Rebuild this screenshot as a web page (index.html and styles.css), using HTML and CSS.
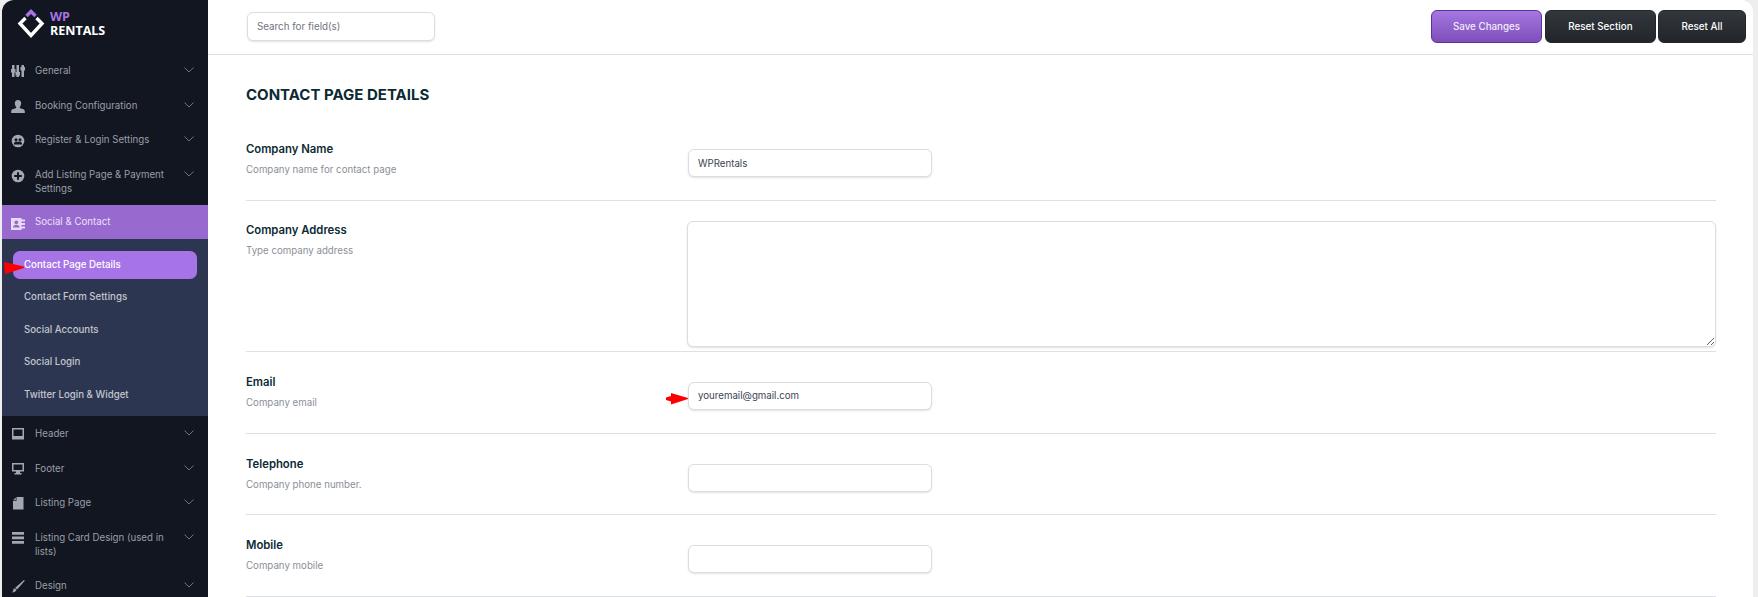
FILE: index.html
```html
<!DOCTYPE html>
<html lang="en">
<head>
    <meta charset="UTF-8">
    <meta name="viewport" content="width=device-width, initial-scale=1.0">
    <title>WpRentals Options</title>
    <link rel="stylesheet" href="styles.css">
</head>
<body>

<div class="app">
    <aside class="sidebar">
        <div class="logo">
            <svg class="logo-mark" width="28" height="30" viewBox="0 0 28 30">
                <path d="M9.500 7 14 2.500 18.500 7" fill="none" stroke="#a674e6" stroke-width="3.400"/>
                <path d="M8.500 9 3 14.500 14 26.500 25 14.500 19.500 9" fill="none" stroke="#fff" stroke-width="3.400"/>
            </svg>
            <div class="logo-text"><span class="logo-wp">WP</span><span class="logo-name">RENTALS</span></div>
        </div>

        <nav>
            <a class="nav-item">
                <svg class="nav-icon" viewBox="0 0 14 14" fill="#a3a7b0"><path d="M1 0h2.500v4H4.500v3.500H3.500V12H1V7.500H0V4h1zM5.500 0H8v7h1v3.500H8V12H5.500v-1.500h-1V7h1zM10.500 0H13v2h1v3.500h-1V12h-2.500V5.500h-1V2h1z"/></svg>
                <span class="nav-label">General</span>
                <svg class="chevron" viewBox="0 0 10 6"><path d="M.5.500 5 5 9.500.500"/></svg>
            </a>
            <a class="nav-item">
                <svg class="nav-icon" viewBox="0 0 14 14" fill="#a3a7b0"><path d="M7 0c2 0 3.200 1.300 3.200 3.200S9 6.500 8.600 8c1.500.6 5.200.8 5.200 3.200V13H.2v-1.800C.2 8.800 3.900 8.600 5.400 8 5 6.500 3.800 5.100 3.800 3.200S5 0 7 0z"/></svg>
                <span class="nav-label">Booking Configuration</span>
                <svg class="chevron" viewBox="0 0 10 6"><path d="M.5.500 5 5 9.500.500"/></svg>
            </a>
            <a class="nav-item">
                <svg class="nav-icon" viewBox="0 0 14 14"><circle cx="7" cy="7" r="6.300" fill="#a3a7b0"/><circle cx="5" cy="5.800" r="1.500" fill="#111620"/><circle cx="9" cy="5.800" r="1.500" fill="#111620"/><path d="M2.800 10.500c0-2 1.500-3 2.200-3s1.200.3 2 .3 1.300-.3 2-.3 2.200 1 2.200 3z" fill="#111620"/></svg>
                <span class="nav-label">Register &amp; Login Settings</span>
                <svg class="chevron" viewBox="0 0 10 6"><path d="M.5.500 5 5 9.500.500"/></svg>
            </a>
            <a class="nav-item">
                <svg class="nav-icon" viewBox="0 0 14 14"><circle cx="7" cy="7" r="6.300" fill="#a3a7b0"/><path d="M6 3.200h2V6h2.800v2H8v2.800H6V8H3.200V6H6z" fill="#111620"/></svg>
                <span class="nav-label">Add Listing Page &amp; Payment Settings</span>
                <svg class="chevron" viewBox="0 0 10 6"><path d="M.5.500 5 5 9.500.500"/></svg>
            </a>
            <a class="nav-item nav-item-open">
                <svg class="nav-icon" viewBox="0 0 14 14"><path d="M0 1h10.500v1.500H14v2h-3.500v1.500H14v2h-3.500v1.500H14v2h-3.500V13H0z" fill="#e6dcf5"/><circle cx="5.300" cy="5.300" r="1.900" fill="#9869cf"/><path d="M2 10.500c0-2 1.400-2.800 3.300-2.800s3.300.8 3.300 2.800z" fill="#9869cf"/></svg>
                <span class="nav-label nav-label-open">Social &amp; Contact</span>
            </a>
            <div class="subnav">
                <a class="subnav-item subnav-active">Contact Page Details
                    <svg class="red-arrow arrow-pill" width="21" height="12" viewBox="0 0 21 12"><path d="M0 0 20 4.500v1.500L1 12z" fill="#f00"/></svg>
                </a>
                <a class="subnav-item">Contact Form Settings</a>
                <a class="subnav-item">Social Accounts</a>
                <a class="subnav-item">Social Login</a>
                <a class="subnav-item">Twitter Login &amp; Widget</a>
            </div>
            <a class="nav-item">
                <svg class="nav-icon" viewBox="0 0 14 14"><path d="M1 0h12v11.500H1z" fill="#a3a7b0"/><path d="M2.500 1.500h9V8h-9z" fill="#111620"/></svg>
                <span class="nav-label">Header</span>
                <svg class="chevron" viewBox="0 0 10 6"><path d="M.5.500 5 5 9.500.500"/></svg>
            </a>
            <a class="nav-item">
                <svg class="nav-icon" viewBox="0 0 14 14"><path d="M1 0h12v8.500H9V10h1.500v1.500h-7V10H5V8.500H1z" fill="#a3a7b0"/><path d="M2.500 1.500h9v5.500h-9z" fill="#111620"/></svg>
                <span class="nav-label">Footer</span>
                <svg class="chevron" viewBox="0 0 10 6"><path d="M.5.500 5 5 9.500.500"/></svg>
            </a>
            <a class="nav-item">
                <svg class="nav-icon" viewBox="0 0 14 14" fill="#a3a7b0"><path d="M5.500 0H12.500v12.500H2V3.800H5.500zM2.300 3 4.800.400V3z"/></svg>
                <span class="nav-label">Listing Page</span>
                <svg class="chevron" viewBox="0 0 10 6"><path d="M.5.500 5 5 9.500.500"/></svg>
            </a>
            <a class="nav-item">
                <svg class="nav-icon" viewBox="0 0 14 14" fill="#a3a7b0"><path d="M1 0h12v2.800H1zM1 4.500h12v2.800H1zM1 9h12v2.800H1z"/></svg>
                <span class="nav-label">Listing Card Design (used in lists)</span>
                <svg class="chevron" viewBox="0 0 10 6"><path d="M.5.500 5 5 9.500.500"/></svg>
            </a>
            <a class="nav-item">
                <svg class="nav-icon" viewBox="0 0 14 14" fill="#a3a7b0"><path d="M13 0 13.800.800 6 9.500 4.200 7.700zM3.700 8.300 5.500 10c-.5 1.500-2.500 2.500-4.500 2.500 1-1 1.200-1.800 1.300-2.700.1-.8.700-1.400 1.400-1.500z"/></svg>
                <span class="nav-label">Design</span>
                <svg class="chevron" viewBox="0 0 10 6"><path d="M.5.500 5 5 9.500.500"/></svg>
            </a>
        </nav>
    </aside>

    <main class="main">
        <header class="topbar">
            <input class="search" type="text" placeholder="Search for field(s)">
            <div class="actions">
                <button class="btn btn-save">Save Changes</button>
                <button class="btn btn-dark btn-section">Reset Section</button>
                <button class="btn btn-dark btn-all">Reset All</button>
            </div>
        </header>

        <section class="content">
            <h1>Contact Page Details</h1>

            <div class="row">
                <div class="row-info">
                    <div class="row-title">Company Name</div>
                    <div class="row-desc">Company name for contact page</div>
                </div>
                <div class="row-field"><input class="text-input" type="text" value="WPRentals"></div>
            </div>

            <div class="row row-area">
                <div class="row-info">
                    <div class="row-title">Company Address</div>
                    <div class="row-desc">Type company address</div>
                </div>
                <div class="row-field"><textarea class="text-area"></textarea></div>
            </div>

            <div class="row">
                <div class="row-info">
                    <div class="row-title">Email</div>
                    <div class="row-desc">Company email</div>
                </div>
                <div class="row-field">
                    <svg class="red-arrow arrow-email" width="22" height="13" viewBox="0 0 22 13"><path d="M0 5.500 5 4V1l17 5v1L5 12.500V9.500L0 8z" fill="#f00"/></svg>
                    <input class="text-input" type="text" value="youremail@gmail.com">
                </div>
            </div>

            <div class="row">
                <div class="row-info">
                    <div class="row-title">Telephone</div>
                    <div class="row-desc">Company phone number.</div>
                </div>
                <div class="row-field"><input class="text-input" type="text"></div>
            </div>

            <div class="row">
                <div class="row-info">
                    <div class="row-title">Mobile</div>
                    <div class="row-desc">Company mobile</div>
                </div>
                <div class="row-field"><input class="text-input" type="text"></div>
            </div>
        </section>
    </main>
</div>

</body>
</html>
```

FILE: styles.css
```css
* {
    box-sizing: border-box;
}
html, body {
    height: 100%;
    margin: 0;
    overflow: hidden;
}
body {
    background: #eeeeee;
    padding: 0 5px 0 2px;
    font-family: 'Inter', sans-serif;
    font-size: 9.7px;
}
.app {
    display: flex;
    height: 597px;
    background: #fff;
    border-radius: 12px 12px 0 0;
    overflow: hidden;
}

/* sidebar */
.sidebar {
    flex: 0 0 206px;
    background: #111620;
}
.logo {
    display: flex;
    align-items: center;
    gap: 5px;
    height: 53px;
    padding: 0 0 5px 15px;
}
.logo-text {
    display: flex;
    flex-direction: column;
    font-family: 'Open Sans', sans-serif;
    font-weight: 700;
    font-size: 12.5px;
    line-height: 14px;
}
.logo-wp {
    color: #a674e6;
}
.logo-name {
    color: #fff;
}
.nav-item {
    display: flex;
    align-items: flex-start;
    padding: 10.25px 14px 10.25px 9px;
    line-height: 14px;
    color: #9a9ea8;
}
.nav-icon {
    flex: 0 0 14px;
    width: 14px;
    height: 14px;
    margin: 2px 10px -2px 0;
}
.nav-label {
    flex: 1;
    padding-right: 14px;
    margin: 1px 0 -1px;
}
.nav-label-open {
    margin: 0;
}
.chevron {
    flex: 0 0 10px;
    width: 10px;
    height: 6px;
    margin-top: 4px;
    fill: none;
    stroke: #6d717b;
    stroke-width: 1;
}
.nav-item-open {
    background: #9869cf;
    color: #e9e0f6;
    height: 34px;
}
.subnav {
    background: #2d3651;
    height: 177px;
    padding: 12px 11px 0;
    display: flex;
    flex-direction: column;
    gap: 4.4px;
}
.subnav-item {
    position: relative;
    display: block;
    height: 28px;
    padding-left: 11px;
    line-height: 28px;
    font-weight: 500;
    color: #c3c6ce;
    border-radius: 7px;
}
.subnav-active {
    background: #a674e6;
    color: #fff;
}
.red-arrow {
    position: absolute;
}
.arrow-pill {
    left: -9px;
    top: 11px;
}

/* top bar */
.main {
    flex: 1;
    min-width: 0;
}
.topbar {
    display: flex;
    justify-content: space-between;
    align-items: flex-start;
    height: 55px;
    padding: 12px 7px 0 39px;
    border-bottom: 1px solid #dfdfe6;
}
.search {
    width: 188px;
    height: 29px;
    padding: 0 9px;
    font: 9.8px 'Inter', sans-serif;
    border: 1px solid #dcdce4;
    border-radius: 6px;
    box-shadow: 0 1px 2px rgba(0, 0, 0, 0.12);
    outline: none;
}
.search::placeholder {
    color: #6f7380;
}
.actions {
    display: flex;
    gap: 2px;
    margin-top: -2px;
}
.btn {
    height: 33px;
    border-radius: 6px;
    font: 500 9.8px 'Inter', sans-serif;
    color: #fff;
}
.btn-save {
    width: 111px;
    margin-right: 1px;
    background: linear-gradient(#a577e2, #7e4fb8);
    border: 1px solid #5f2f9e;
    color: #f2ebfb;
}
.btn-dark {
    background: linear-gradient(#32373d, #22262b);
    border: 1px solid #22262b;
}
.btn-section {
    width: 111px;
}
.btn-all {
    width: 88px;
}

/* settings */
.content {
    padding: 0 37px 0 38px;
}
h1 {
    margin: 0;
    padding-top: 31px;
    height: 64px;
    font-size: 15px;
    line-height: 18px;
    font-weight: 700;
    text-transform: uppercase;
    color: #0c2a33;
}
.row {
    display: flex;
    padding: 30px 0 22.8px;
    border-bottom: 1px solid #dfdfe6;
}
.row-area {
    padding: 20px 0 4px;
}
.row-info {
    flex: 0 0 442px;
}
.row-area .row-info {
    padding-top: 2px;
}
.row-title {
    font-size: 11.3px;
    font-weight: 600;
    line-height: 14px;
    margin-top: -7px;
    color: #0c2a33;
}
.row-area .row-title {
    margin-top: 0;
}
.row-desc {
    margin-top: 7px;
    line-height: 14px;
    color: #8b8f98;
}
.row-field {
    position: relative;
    flex: 1;
}
.text-input {
    display: block;
    width: 244px;
    height: 28px;
    padding: 0 9px;
    font: 9.7px 'Inter', sans-serif;
    color: #3d4354;
    background: #fff;
    border: 1px solid #dcdce4;
    border-radius: 6px;
    box-shadow: 0 1px 2px rgba(0, 0, 0, 0.12);
    outline: none;
}
.text-area {
    display: block;
    width: calc(100% + 1px);
    height: 126px;
    margin-left: -1px;
    border: 1px solid #dcdce4;
    border-radius: 6px;
    box-shadow: 0 1px 2px rgba(0, 0, 0, 0.12);
    outline: none;
}
.arrow-email {
    left: -22px;
    top: 10px;
}
```
